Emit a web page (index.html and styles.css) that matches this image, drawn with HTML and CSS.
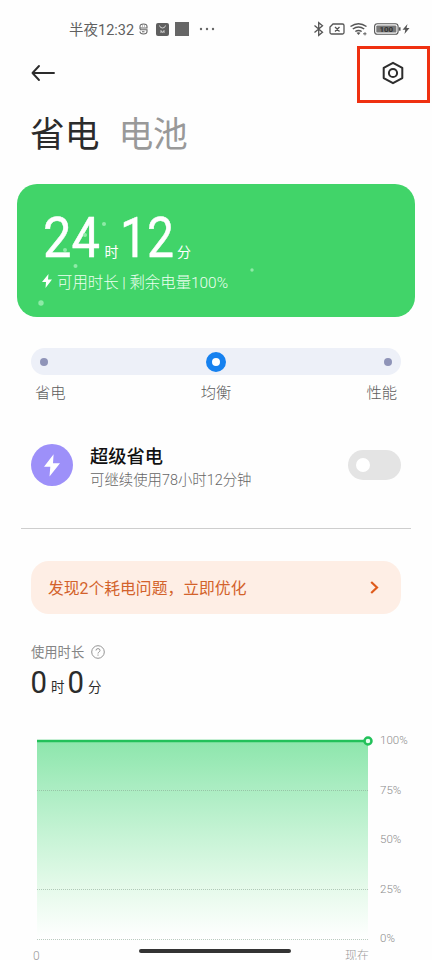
FILE: index.html
```html
<!DOCTYPE html>
<html lang="zh-CN">
<head>
<meta charset="utf-8">
<title>省电与电池</title>
<link rel="stylesheet" href="styles.css">
</head>
<body>
<main class="screen">
  <div class="status">
    <div class="status-left">
      <span class="clock">半夜12:32</span>
      <svg class="ic-s" width="9" height="12" viewBox="0 0 9 12" fill="none" stroke="#666" stroke-width="1.1"><path d="M1 6.200V3.500Q1 1 4.500 1T8 3.500V5H1M3 3h.8M5.200 3H6M1 6.800H8V8.500Q8 11 4.500 11T1 8.500M3 8.800H5.500"/></svg>
      <svg class="ic-app" width="13" height="13" viewBox="0 0 13 13"><rect width="13" height="13" rx="2" fill="#5f5f5f"/><path d="M3.500 2.500Q4 5 6.500 5T9.500 2.500M5 10V7.500L6.500 9.500 8 7.500V10" fill="none" stroke="#ddd" stroke-width=".9"/></svg>
      <span class="square"></span>
      <svg class="ic-more" width="16" height="4" viewBox="0 0 16 4" fill="#666"><circle cx="2" cy="2" r="1.200"/><circle cx="8" cy="2" r="1.200"/><circle cx="14" cy="2" r="1.200"/></svg>
    </div>
    <svg width="98" height="18" viewBox="0 0 98 18" fill="none" stroke="#555" stroke-width="1.300">
      <path d="M4.500 5.500 12.500 12.300 8.700 15.300V2.700L12.500 5.700 4.500 12.500"/>
      <path d="M23 4H32.500Q34 4 34 5.500V12.500Q34 14 32.500 14H21.500Q20 14 20 12.500V7ZM25 7 29.500 11.500M29.500 7 25 11.500"/>
      <path d="M40.500 6.500Q48.500 .8 56.500 6.500M42.800 9Q48.500 5 54.200 9M45.300 11.500Q48.500 9.300 51.700 11.500" stroke-width="1.500"/><path d="m46.500 12.800 2 2.200 2-2.200Q48.500 11.500 46.500 12.800Z" fill="#555" stroke="none"/><path d="M53 13.800h3.500M55 12.200v3.200" stroke-width=".9"/>
      <rect x="64.600" y="3.800" width="23.500" height="10.400" rx="2.800" stroke-width="1.100"/><rect x="66.300" y="5.400" width="20.100" height="7.200" rx="1.200" fill="#777" stroke="none"/><path d="M89.700 7.300v3.400" stroke-width="1.700"/>
      <text class="battery-value" x="76.300" y="11.900" text-anchor="middle">100</text>
    </svg>
    <svg class="charge" width="8" height="10" viewBox="0 0 8 10"><path d="M5.500 0 .5 5.700H3.300L2.500 10 7.500 4H4.500Z" fill="#555"/></svg>
  </div>

  <header class="topbar">
    <svg width="26" height="18" viewBox="0 0 26 18" fill="none" stroke="#2c2c2c" stroke-width="1.900" stroke-linecap="round" stroke-linejoin="round"><path d="M24 9H2.500M9 2 2.500 9l6.500 7"/></svg>
    <div class="settings">
      <svg width="24" height="24" viewBox="0 0 24 24" fill="none" stroke="#2d2d2d" stroke-width="2" stroke-linejoin="round"><path d="M12 1.800 21.300 6.900V17.100L12 22.200 2.700 17.100V6.900Z"/><circle cx="12" cy="12" r="4.100"/></svg>
    </div>
  </header>

  <nav class="tabs"><span class="tab tab-active">省电</span><span class="tab">电池</span></nav>

  <section class="card">
    <svg class="remaining" width="160" height="56" viewBox="0 0 160 56" fill="#fff">
      <text class="big" x="1" y="47" textLength="57" lengthAdjust="spacingAndGlyphs">24</text>
      <text class="unit" x="62.500" y="47">时</text>
      <text class="big" x="78" y="47" textLength="54" lengthAdjust="spacingAndGlyphs">12</text>
      <text class="unit" x="135" y="47">分</text>
    </svg>
    <div class="card-note">
      <svg width="10" height="14" viewBox="0 0 10 14" fill="#fff"><path d="M6.500 0 0 8H4L3.500 14 10 5.500H6Z"/></svg>
      <span>可用时长 | 剩余电量100%</span>
    </div>
    <svg class="bubbles" width="398" height="133" viewBox="0 0 398 133" fill="#8eeaa7"><circle cx="87" cy="40" r="2"/><circle cx="68" cy="51" r="2"/><circle cx="48" cy="66" r="2"/><circle cx="58.500" cy="82" r="2"/><circle cx="24" cy="119" r="2.700"/><circle cx="235" cy="86" r="1.700"/></svg>
  </section>

  <section class="modes">
    <div class="track"><i class="stop"></i><i class="knob"></i><i class="stop"></i></div>
    <div class="mode-names"><span>省电</span><span>均衡</span><span>性能</span></div>
  </section>

  <section class="saver">
    <svg width="42" height="42" viewBox="0 0 42 42"><circle cx="21" cy="21" r="21" fill="#9d90f9"/><path d="M22.600 10.300 13 22.700h6.300L18.500 32.500 29 19.300H22Z" fill="#fff"/></svg>
    <div class="saver-text"><h2>超级省电</h2><p>可继续使用78小时12分钟</p></div>
    <div class="toggle"><i></i></div>
  </section>

  <section class="alert">
    <span>发现2个耗电问题，立即优化</span>
    <svg width="9" height="13" viewBox="0 0 9 13" fill="none" stroke="#df5b1c" stroke-width="2.200"><path d="m1.200 1 5.800 5.500L1.200 12"/></svg>
  </section>

  <section class="usage">
    <div class="usage-title"><span>使用时长</span>
      <svg width="14" height="14" viewBox="0 0 14 14" fill="none" stroke="#949494"><circle cx="7" cy="7" r="6.300"/><path d="M5 5.500Q5 3.600 7 3.600T9 5.400Q9 6.400 8 7T7 8.500M7 9.500v1.200"/></svg>
    </div>
    <svg class="usage-value" width="80" height="32" viewBox="0 0 80 32" fill="#2b2b2b">
      <text class="num" x="-.5" y="25.500" textLength="16.500" lengthAdjust="spacingAndGlyphs">0</text>
      <text class="unit-small" x="20" y="25">时</text>
      <text class="num" x="36.500" y="25.500" textLength="16.500" lengthAdjust="spacingAndGlyphs">0</text>
      <text class="unit-small" x="57" y="25">分</text>
    </svg>
  </section>

  <section class="chart">
    <svg width="338" height="208" viewBox="0 0 338 208">
      <defs><linearGradient id="fill" x1="0" y1="0" x2="0" y2="1"><stop offset="0" stop-color="#8de6ac"/><stop offset=".25" stop-color="#acedc3"/><stop offset=".5" stop-color="#c9f4d7"/><stop offset=".75" stop-color="#e6faeb"/><stop offset="1" stop-color="#fff"/></linearGradient></defs>
      <path d="M1 6H332V204H1Z" fill="url(#fill)"/>
      <path d="M1 55.500H332M1 154.500H332M1 204.500H332" stroke="#8aa894" stroke-opacity=".6" stroke-dasharray="1 1"/>
      <path d="M1 6H328" stroke="#22c15a" stroke-width="2.400"/>
      <circle cx="332" cy="6" r="3.500" fill="#e8fff0" stroke="#22c15a" stroke-width="2.500"/>
    </svg>
    <div class="scale"><span>100%</span><span>75%</span><span>50%</span><span>25%</span><span>0%</span></div>
  </section>
  <div class="axis"><span>0</span><span>现在</span></div>
  <div class="home-bar"></div>
</main>
</body>
</html>
```
FILE: styles.css
```css
* { box-sizing: border-box; }
body { margin: 0; background: #fefefe; font-family: Roboto, "Noto Sans CJK SC", sans-serif; }
svg { display: block; flex: none; overflow: visible; }
h2, p { margin: 0; }
.screen { position: relative; width: 432px; height: 960px; overflow: hidden; display: flex; flex-direction: column; white-space: nowrap; }
.screen > * { flex-shrink: 0; }
.status { height: 46px; padding: 20px 22px 0 69px; display: flex; align-items: flex-start; }
.status-left { display: flex; align-items: center; height: 18px; width: 241px; }
.charge { margin: 4px 0 0 -6px; }
.clock { font-size: 14.500px; line-height: 18px; padding-top: 3px; color: #606060; width: 69px; }
.ic-s { margin-left: 1px; }
.ic-app { margin-left: 8px; }
.square { width: 14px; height: 14px; margin-left: 6px; background: #666; }
.ic-more { margin-left: 10px; }
.battery-value { font: bold 8px Roboto, sans-serif; fill: #333; stroke: none; }
.topbar { height: 57px; padding: 0 2px 0 30px; display: flex; justify-content: space-between; align-items: center; }
.topbar > svg { margin-top: -3px; }
.settings { width: 73px; height: 57px; border: 3px solid #ef3011; display: flex; align-items: center; justify-content: center; }
.settings svg { margin: -4px 0 0 -2px; }
.tabs { height: 81px; padding: 7px 0 0 30px; display: flex; gap: 19px; }
.tab { font-size: 34.700px; line-height: 50px; color: #999; }
.tab-active { color: #2b2b2b; }
.card { position: relative; width: 398px; height: 133px; margin-left: 17px; padding: 26px 0 0 25px; border-radius: 20px; background: #41d469; }
.bubbles { position: absolute; left: 0; top: 0; }
.big { font-size: 56px; stroke: #fff; stroke-width: .5px; }
.unit { font-size: 14px; }
.card-note { display: flex; align-items: center; gap: 5px; height: 22px; margin-top: 4px; color: #ecfff0; font-size: 15.400px; font-weight: 300; }
.card-note span { margin-top: -1px; }
.modes { margin: 31px 31px 0 31px; width: 370px; height: 55px; }
.track { height: 27px; border-radius: 14px; background: #edf0f8; padding: 0 9px; display: flex; align-items: center; justify-content: space-between; }
.stop { width: 8px; height: 8px; border-radius: 50%; background: #8f94b8; }
.knob { width: 20px; height: 20px; border-radius: 50%; border: 6px solid #1681ef; background: #fff; }
.mode-names { display: flex; justify-content: space-between; padding: 7px 4px 0 4px; font-size: 15.300px; line-height: 22px; font-weight: 300; color: #5c5c5c; }
.saver { position: relative; display: flex; align-items: center; width: 370px; height: 84px; margin: 20px 31px 0; }
.saver-text { margin-left: 17px; padding-top: 6px; flex: 1; }
.saver h2 { font-size: 18.300px; line-height: 25px; font-weight: 500; color: #111; }
.saver p { font-size: 14.400px; line-height: 24px; font-weight: 300; color: #666; }
.toggle { width: 53px; height: 30px; border-radius: 15px; background: #e4e4e4; padding: 8px; }
.toggle i { display: block; width: 14px; height: 14px; border-radius: 50%; background: #fff; }
.saver::after { content: ""; position: absolute; left: -10px; width: 390px; height: 1px; top: 105px; background: #cecece; }
.alert { width: 370px; height: 53px; margin: 54px 0 0 31px; padding: 0 22px 0 17px; border-radius: 18px; background: #feeee5; color: #d3622b; display: flex; align-items: center; justify-content: space-between; font-size: 15.800px; }
.usage { margin: 27px 0 0 31px; }
.usage-title { display: flex; align-items: center; gap: 7px; height: 22px; font-size: 13.300px; color: #858585; }
.usage-title span { margin-top: -2px; }
.usage-value { margin-top: 4px; }
.num { font-size: 31px; }
.unit-small { font-size: 13.500px; }
.chart { display: flex; margin: 36px 0 0 36px; height: 211px; }
.scale { display: flex; flex-direction: column; justify-content: space-between; height: 212px; margin: -2px 0 0 6px; font-size: 11.500px; line-height: 14px; font-weight: 300; color: #8c8c8c; }
.axis { display: flex; justify-content: space-between; width: 336px; margin-left: 33px; padding-top: 2px; font-size: 12px; line-height: 16px; font-weight: 300; color: #999; }
.home-bar { position: absolute; left: 139px; top: 949px; width: 152px; height: 4px; border-radius: 2px; background: #333; }
```
